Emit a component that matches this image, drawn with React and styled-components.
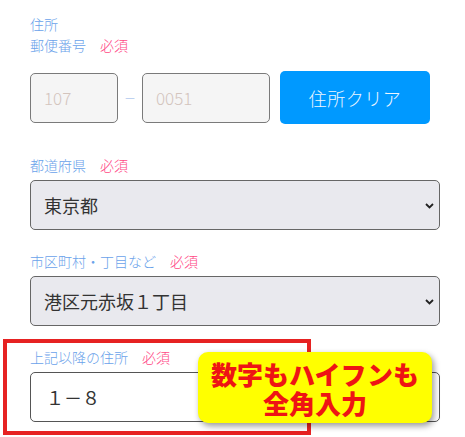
import React from "react";
import styled, { createGlobalStyle } from "styled-components";

const Global = createGlobalStyle`
  html, body { margin: 0; padding: 0; background: #fff; }
  body { font-family: "Noto Sans CJK JP", "Noto Sans", sans-serif; }
  * { box-sizing: border-box; }
`;

const Form = styled.form`
  width: 465px;
  min-height: 437px;
  padding: 14px 25px 15px 30px;
`;

const Label = styled.div`
  font-size: 14px;
  line-height: 21px;
  font-weight: 300;
  color: #6aa2ea;
  margin-bottom: ${(p) => p.$mb || 0}px;
`;

const Required = styled.span`
  color: #ff4a86;
  margin-left: 14px;
`;

const PostalRow = styled.div`
  display: flex;
  align-items: center;
  height: 53px;
`;

const PostalInput = styled.input`
  width: ${(p) => p.$w}px;
  height: 50px;
  border: 1px solid #7a7a7a;
  border-radius: 5px;
  background: #f5f5f5;
  padding: 0 0 0 13px;
  font-family: "Noto Sans CJK JP", "Noto Sans", sans-serif;
  font-size: 17px;
  font-weight: 300;
  color: #333;
  outline: none;
  &::placeholder { color: #d3c4bd; }
`;

const Dash = styled.span`
  width: 24px;
  text-align: center;
  font-size: 12px;
  color: #8cb2e6;
  font-weight: 300;
`;

const ClearButton = styled.button`
  width: 150px;
  height: 53px;
  margin-left: 10px;
  border: none;
  border-radius: 5px;
  background: #0099ff;
  color: #eef6ff;
  font-family: "Noto Sans CJK JP", "Noto Sans", sans-serif;
  font-size: 18px;
  font-weight: 300;
  letter-spacing: 0.5px;
`;

const Group = styled.div`
  position: relative;
  margin-top: ${(p) => p.$mt}px;
`;

const SelectWrap = styled.div`
  position: relative;
  width: 410px;
  height: 50px;
`;

const Select = styled.select`
  appearance: none;
  width: 100%;
  height: 100%;
  border: 1px solid #666;
  border-radius: 5px;
  background: #e9e9ee;
  padding: 0 0 0 13px;
  font-family: "Noto Sans CJK JP", "Noto Sans", sans-serif;
  font-size: 18px;
  color: #333;
  outline: none;
`;

const Chevron = styled.svg`
  position: absolute;
  right: 6px;
  top: 23px;
  pointer-events: none;
`;

const TextInput = styled.input`
  width: 410px;
  height: 50px;
  border: 1px solid #555;
  border-radius: 5px;
  background: #fff;
  padding: 0 0 0 15px;
  font-family: "Noto Sans CJK JP", "Noto Sans", sans-serif;
  font-size: 18px;
  color: #333;
  outline: none;
`;

const Highlight = styled.div`
  position: absolute;
  left: -27px;
  top: -8px;
  width: 308px;
  height: 96px;
  border: 4px solid #e62222;
  pointer-events: none;
`;

const Bubble = styled.div`
  position: absolute;
  left: 168px;
  top: 5px;
  width: 234px;
  height: 71px;
  border-radius: 10px;
  background: #ffff00;
  box-shadow: 2px 3px 6px rgba(0, 0, 0, 0.4);
  display: flex;
  align-items: center;
  justify-content: center;
  text-align: center;
  color: #ee1414;
  font-size: 26px;
  line-height: 29px;
  font-weight: 900;
`;

function ChevronIcon() {
  return (
    <Chevron width="9" height="6" viewBox="0 0 9 6">
      <path d="M1 1 L4.5 4.5 L8 1" fill="none" stroke="#222" strokeWidth="1.8" />
    </Chevron>
  );
}

export default function App() {
  return (
    <>
      <Global />
      <Form onSubmit={(e) => e.preventDefault()}>
        <Label>住所</Label>
        <Label $mb={15}>
          郵便番号<Required>必須</Required>
        </Label>
        <PostalRow>
          <PostalInput $w={88} placeholder="107" />
          <Dash>－</Dash>
          <PostalInput $w={128} placeholder="0051" />
          <ClearButton type="button">住所クリア</ClearButton>
        </PostalRow>

        <Group $mt={31}>
          <Label $mb={4}>
            都道府県<Required>必須</Required>
          </Label>
          <SelectWrap>
            <Select defaultValue="東京都">
              <option>東京都</option>
            </Select>
            <ChevronIcon />
          </SelectWrap>
        </Group>

        <Group $mt={21}>
          <Label $mb={4}>
            市区町村・丁目など<Required>必須</Required>
          </Label>
          <SelectWrap>
            <Select defaultValue="港区元赤坂１丁目">
              <option>港区元赤坂１丁目</option>
            </Select>
            <ChevronIcon />
          </SelectWrap>
        </Group>

        <Group $mt={21}>
          <Label $mb={4}>
            上記以降の住所<Required>必須</Required>
          </Label>
          <TextInput defaultValue="１－８" />
          <Highlight />
          <Bubble>
            <div>
              数字もハイフンも
              <br />
              全角入力
            </div>
          </Bubble>
        </Group>
      </Form>
    </>
  );
}
